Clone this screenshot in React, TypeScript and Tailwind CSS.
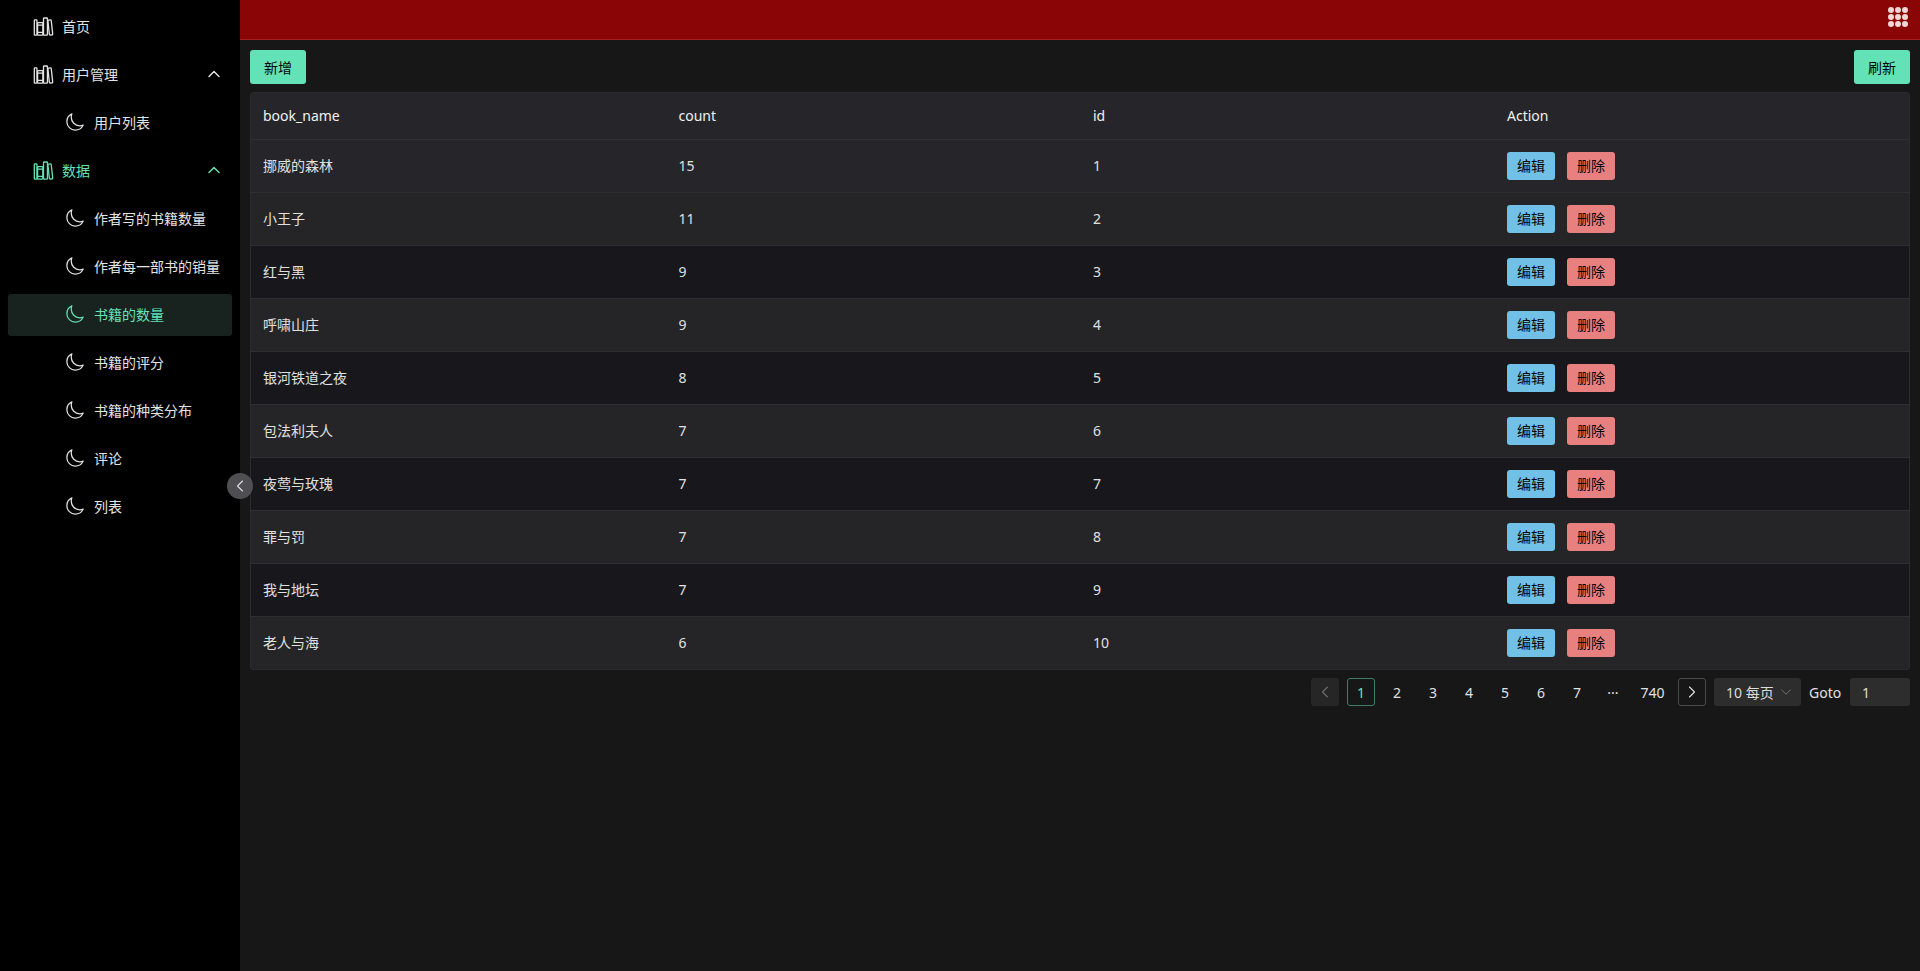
import React from 'react';
import { IoLibraryOutline, IoMoonOutline } from 'react-icons/io5';
import { ChevronDown, ChevronLeft, ChevronRight, ChevronUp } from 'lucide-react';

const rows = [
  ['挪威的森林', 15, 1],
  ['小王子', 11, 2],
  ['红与黑', 9, 3],
  ['呼啸山庄', 9, 4],
  ['银河铁道之夜', 8, 5],
  ['包法利夫人', 7, 6],
  ['夜莺与玫瑰', 7, 7],
  ['罪与罚', 7, 8],
  ['我与地坛', 7, 9],
  ['老人与海', 6, 10],
] as const;

const subItems = ['作者写的书籍数量', '作者每一部书的销量', '书籍的数量', '书籍的评分', '书籍的种类分布', '评论', '列表'];

function TopItem({ label, open, active }: { label: string; open?: boolean; active?: boolean }) {
  return (
    <div className={`flex h-[42px] items-center pb-[2px] pl-[33px] pr-[16px] ${active ? 'text-[#63e2b7]' : 'text-[#e4e4e4]'}`}>
      <IoLibraryOutline className="h-[21px] w-[21px]" />
      <span className="ml-[8px] flex-1">{label}</span>
      {open && <ChevronUp className="h-[20px] w-[20px]" strokeWidth={1.7} />}
    </div>
  );
}

function SubItem({ label, active }: { label: string; active?: boolean }) {
  return (
    <div
      className={`mx-[8px] flex h-[42px] items-center rounded-[3px] pb-[2px] pl-[57px] ${
        active ? 'bg-[#18231f] text-[#63e2b7]' : 'text-[#e4e4e4]'
      }`}
    >
      <IoMoonOutline className="h-[20px] w-[20px]" />
      <span className="ml-[9px] whitespace-nowrap">{label}</span>
    </div>
  );
}

function PageBtn({ children, active }: { children: React.ReactNode; active?: boolean }) {
  return (
    <div
      className={`flex h-[28px] min-w-[28px] items-center justify-center rounded-[3px] px-[5.5px] ${
        active ? 'border border-[#3b8068] text-[#63e2b7]' : 'text-[#e0e0e0]'
      }`}
    >
      {children}
    </div>
  );
}

export default function App() {
  return (
    <div className="relative flex h-[971px] w-full overflow-hidden bg-[#171717] font-['Noto_Sans','Noto_Sans_CJK_SC',sans-serif] text-[14px] text-[#e0e0e0]">
      <aside className="flex w-[240px] shrink-0 flex-col gap-[6px] bg-black pt-[6px]">
        <TopItem label="首页" />
        <TopItem label="用户管理" open />
        <SubItem label="用户列表" />
        <TopItem label="数据" open active />
        {subItems.map((s) => (
          <SubItem key={s} label={s} active={s === '书籍的数量'} />
        ))}
      </aside>

      <button className="absolute left-[227px] top-[473px] flex h-[26px] w-[26px] items-center justify-center rounded-full bg-[#4f4f53] text-[#e0e0e0]">
        <ChevronLeft className="h-[20px] w-[20px]" strokeWidth={1.3} />
      </button>

      <main className="flex min-w-0 flex-1 flex-col">
        <header className="flex h-[40px] shrink-0 items-center justify-end border-b border-[#a32020] bg-[#8a0606] pr-[11px]">
          <svg className="mb-[6px]" width="22" height="22" viewBox="0 0 22 22" fill="#f2d5d5">
            {[4, 11, 18].map((y) =>
              [4, 11, 18].map((x) => <circle key={`${x}-${y}`} cx={x} cy={y} r="3" />),
            )}
          </svg>
        </header>

        <div className="flex flex-col px-[10px] pt-[10px]">
          <div className="flex justify-between">
            <button className="h-[34px] w-[56px] rounded-[3px] bg-[#63e2b7] text-[#050505]">新增</button>
            <button className="h-[34px] w-[56px] rounded-[3px] bg-[#63e2b7] text-[#050505]">刷新</button>
          </div>

          <div className="mt-[8px] overflow-hidden rounded-[3px] border border-[#2c2c30]">
            <table className="w-full table-fixed border-collapse">
              <thead>
                <tr className="h-[46px] bg-[#26262a] text-left text-[#f0f0f0]">
                  <th className="pl-[12px] font-normal">book_name</th>
                  <th className="pl-[13px] font-normal">count</th>
                  <th className="pl-[13px] font-normal">id</th>
                  <th className="pl-[12.5px] font-normal">Action</th>
                </tr>
              </thead>
              <tbody>
                {rows.map(([name, count, id], i) => (
                  <tr
                    key={id}
                    className={`h-[53px] border-t border-[#2f2f33] ${
                      i === 0 ? 'bg-[#26262a]' : i % 2 === 0 ? 'bg-[#18181c]' : 'bg-[#252527]'
                    }`}
                  >
                    <td className="pl-[12px]">{name}</td>
                    <td className="pl-[13px]">{count}</td>
                    <td className="pl-[13px]">{id}</td>
                    <td className="pl-[12.5px]">
                      <div className="flex gap-[12px]">
                        <button className="h-[28px] w-[48px] rounded-[3px] bg-[#70c0e8] text-[#050505]">编辑</button>
                        <button className="h-[28px] w-[48px] rounded-[3px] bg-[#e88080] text-[#050505]">删除</button>
                      </div>
                    </td>
                  </tr>
                ))}
              </tbody>
            </table>
          </div>

          <div className="mt-[8px] flex items-center justify-end gap-[8px]">
            <div className="flex h-[28px] w-[28px] items-center justify-center rounded-[3px] bg-[#262626] text-[#6c6c6c]">
              <ChevronLeft className="h-[20px] w-[20px]" strokeWidth={1.3} />
            </div>
            <PageBtn active>1</PageBtn>
            {[2, 3, 4, 5, 6, 7].map((n) => (
              <PageBtn key={n}>{n}</PageBtn>
            ))}
            <PageBtn>···</PageBtn>
            <PageBtn>740</PageBtn>
            <div className="flex h-[28px] w-[28px] items-center justify-center rounded-[3px] border border-[#4a4a4a] text-[#e0e0e0]">
              <ChevronRight className="h-[20px] w-[20px]" strokeWidth={1.3} />
            </div>
            <div className="flex h-[28px] w-[87px] items-center justify-between rounded-[3px] bg-[#2d2d2d] pl-[12px] pr-[6px] text-[#dcdcdc]">
              <span className="whitespace-nowrap">10 每页</span>
              <ChevronDown className="h-[18px] w-[18px] text-[#777777]" strokeWidth={1.2} />
            </div>
            <span className="w-[33px] whitespace-nowrap text-[#e0e0e0]">Goto</span>
            <div className="flex h-[28px] w-[60px] items-center rounded-[3px] bg-[#2d2d2d] pl-[12px] text-[#dcdcdc]">1</div>
          </div>
        </div>
      </main>
    </div>
  );
}
